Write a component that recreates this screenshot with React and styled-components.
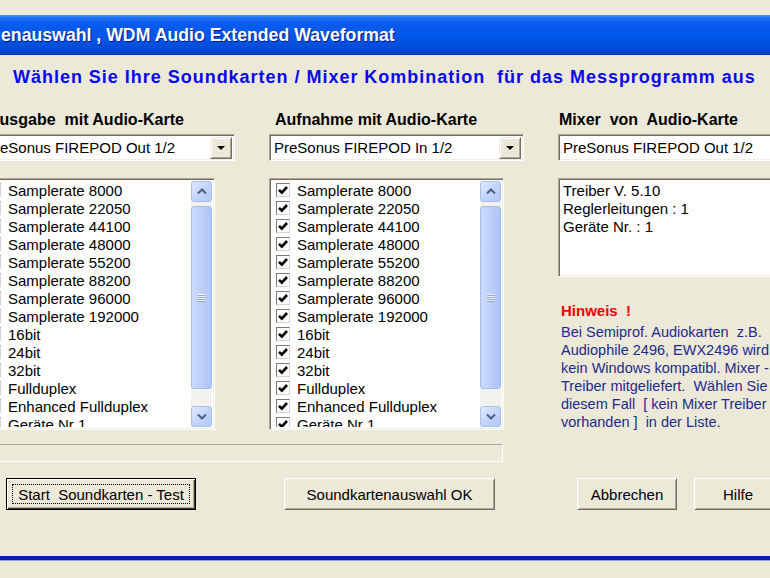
import React from 'react'
import styled, { createGlobalStyle } from 'styled-components'

const GlobalStyle = createGlobalStyle`
  html, body {
    margin: 0;
    padding: 0;
    background: #ECE9D8;
  }
  body {
    font-family: "Liberation Sans", Arial, sans-serif;
  }
`

const Window = styled.div`
  width: 770px;
  height: 578px;
  overflow: hidden;
  background: #ECE9D8;
  padding-top: 15px;
  box-sizing: border-box;
`

const TitleBar = styled.div`
  height: 40px;
  display: flex;
  align-items: center;
  padding-left: 1px;
  color: #fff;
  font-weight: bold;
  font-size: 17.7px;
  white-space: pre;
  text-shadow: 1px 1px 0 #0a1a8a;
  background: linear-gradient(to bottom, #4a96fa 0, #2274f4 6%, #0a5cf0 18%, #0056e6 55%, #004bd9 85%, #003cbd 100%);
`

const Heading = styled.div`
  margin: 11px 0 0 13px;
  height: 22px;
  line-height: 22px;
  color: #0808f0;
  font-weight: bold;
  font-size: 18px;
  letter-spacing: 0.98px;
  white-space: pre;
`

const Columns = styled.div`
  display: grid;
  grid-template-columns: 255px 255px 240px;
  column-gap: 34px;
  margin: 23px 0 0 -20px;
  align-items: start;
`

const Column = styled.div`
  display: flex;
  flex-direction: column;
`

const Label = styled.div`
  height: 18px;
  line-height: 18px;
  font-size: 16px;
  font-weight: bold;
  color: #000;
  white-space: pre;
  padding-left: ${p => p.$indent}px;
`

const Sunken = styled.div`
  box-sizing: border-box;
  background: #fff;
  border: 1px solid;
  border-color: #aca899 #fff #fff #aca899;
  box-shadow: inset 1px 1px 0 #716f64, inset -1px -1px 0 #f1efe2;
`

const Combo = styled(Sunken)`
  margin-top: 5px;
  height: 27px;
  display: flex;
  align-items: center;
  justify-content: space-between;
  padding: 0 2px 0 4px;
  font-size: 15px;
  white-space: nowrap;
`

const DropButton = styled.div`
  box-sizing: border-box;
  width: 22px;
  height: 22px;
  flex-shrink: 0;
  display: flex;
  align-items: center;
  justify-content: center;
  background: #ece9d8;
  border: 1px solid;
  border-color: #f1efe2 #716f64 #716f64 #f1efe2;
  box-shadow: inset 1px 1px 0 #fff, inset -1px -1px 0 #aca899;

  &::after {
    content: "";
    border-left: 4px solid transparent;
    border-right: 4px solid transparent;
    border-top: 4px solid #000;
    margin-top: 1px;
  }
`

const ListBox = styled(Sunken)`
  margin-top: 17px;
  width: 235px;
  height: 252px;
  display: flex;
  padding: 2px;
`

const Items = styled.div`
  flex: 1;
  overflow: hidden;
`

const Row = styled.div`
  height: 18px;
  display: flex;
  align-items: center;
  font-size: 15px;
  white-space: nowrap;
  color: #000;
`

const Check = styled.div`
  box-sizing: border-box;
  width: 14px;
  height: 14px;
  margin: 0 7px 0 4px;
  flex-shrink: 0;
  background: #fff;
  border: 1px solid;
  border-color: #7f7c70 #d9d6c8 #d9d6c8 #7f7c70;
  display: flex;
  align-items: center;
  justify-content: center;
`

const ScrollBar = styled.div`
  width: 21px;
  display: flex;
  flex-direction: column;
  background: #f4f2ec;
`

const ScrollButton = styled.div`
  box-sizing: border-box;
  height: 21px;
  display: flex;
  align-items: center;
  justify-content: center;
  border: 1px solid #aabfee;
  border-radius: 3px;
  background: linear-gradient(135deg, #e2ebfe 0%, #c4d5fb 50%, #b3c8f6 100%);
`

const Thumb = styled.div`
  box-sizing: border-box;
  margin-top: 4px;
  height: 183px;
  display: flex;
  align-items: center;
  justify-content: center;
  border: 1px solid #a5bcee;
  border-radius: 3px;
  background: linear-gradient(to right, #cddbfd 0%, #bccff9 50%, #b0c5f5 100%);
`

const Grip = styled.div`
  width: 8px;
  height: 8px;
  background: repeating-linear-gradient(to bottom, #eef3ff 0, #eef3ff 1px, #8ea6dc 1px, #8ea6dc 2px);
`

const Track = styled.div`
  flex: 1;
`

const TextBox = styled(Sunken)`
  margin-top: 17px;
  height: 99px;
  padding: 3px 4px;
  font-size: 15px;
  line-height: 18px;
  white-space: pre;
`

const HintTitle = styled.div`
  margin-top: 25px;
  padding-left: 3px;
  height: 18px;
  line-height: 18px;
  color: #f00000;
  font-size: 15px;
  font-weight: bold;
  white-space: pre;
`

const HintText = styled.div`
  margin-top: 3px;
  padding-left: 3px;
  color: #1e2a8c;
  font-size: 14.5px;
  line-height: 18px;
  white-space: pre;
`

const Progress = styled.div`
  box-sizing: border-box;
  margin: 13px 0 0 -20px;
  width: 523px;
  height: 18px;
  border: 1px solid;
  border-color: #aca899 #fff #fff #aca899;
`

const ButtonRow = styled.div`
  display: flex;
  margin-top: 16px;
  padding-left: 6px;
`

const Button = styled.div`
  box-sizing: border-box;
  flex-shrink: 0;
  width: ${p => p.$w}px;
  margin-left: ${p => p.$ml || 0}px;
  height: 32px;
  display: flex;
  align-items: center;
  justify-content: center;
  background: #ece9d8;
  font-size: 15px;
  color: #000;
  white-space: pre;
  border: 1px solid;
  border-color: ${p => p.$default ? '#000' : '#fff #716f64 #716f64 #fff'};
  box-shadow: ${p => p.$default
    ? 'inset 1px 1px 0 #fff, inset -1px -1px 0 #404040, inset -2px -2px 0 #aca899'
    : 'inset 1px 1px 0 #f1efe2, inset -1px -1px 0 #aca899'};
`

const Focus = styled.div`
  box-sizing: border-box;
  width: calc(100% - 10px);
  height: 20px;
  display: flex;
  align-items: center;
  justify-content: center;
  border: 1px dotted #000;
`

const BottomLine = styled.div`
  margin-top: 45px;
  height: 4px;
  background: #0a1fa6;
  border-top: 1px solid #efe6b4;
  border-bottom: 1px solid #8ea0d8;
`

const items = [
  'Samplerate 8000',
  'Samplerate 22050',
  'Samplerate 44100',
  'Samplerate 48000',
  'Samplerate 55200',
  'Samplerate 88200',
  'Samplerate 96000',
  'Samplerate 192000',
  '16bit',
  '24bit',
  '32bit',
  'Fullduplex',
  'Enhanced Fullduplex',
  'Geräte Nr 1',
]

const CheckMark = () => (
  <svg width="10" height="10" viewBox="0 0 10 10">
    <polyline points="1,4.8 3.8,7.6 9,2" fill="none" stroke="#000" strokeWidth="2.6" />
  </svg>
)

const Arrow = ({ up }) => (
  <svg width="10" height="7" viewBox="0 0 10 7">
    <polyline
      points={up ? '1,5.5 5,1.5 9,5.5' : '1,1.5 5,5.5 9,1.5'}
      fill="none"
      stroke="#4d6185"
      strokeWidth="2"
    />
  </svg>
)

const CheckList = () => (
  <ListBox>
    <Items>
      {items.map(i => (
        <Row key={i}>
          <Check><CheckMark /></Check>
          {i}
        </Row>
      ))}
    </Items>
    <ScrollBar>
      <ScrollButton><Arrow up /></ScrollButton>
      <Thumb><Grip /></Thumb>
      <Track />
      <ScrollButton><Arrow /></ScrollButton>
    </ScrollBar>
  </ListBox>
)

const App = () => {
  return (
    <Window>
      <GlobalStyle />
      <TitleBar>enauswahl , WDM Audio Extended Waveformat</TitleBar>
      <Heading>Wählen Sie Ihre Soundkarten / Mixer Kombination  für das Messprogramm aus</Heading>
      <Columns>
        <Column>
          <Label $indent={8}>Ausgabe  mit Audio-Karte</Label>
          <Combo>
            <span>PreSonus FIREPOD Out 1/2</span>
            <DropButton />
          </Combo>
          <CheckList />
        </Column>
        <Column>
          <Label $indent={6}>Aufnahme mit Audio-Karte</Label>
          <Combo>
            <span>PreSonus FIREPOD In 1/2</span>
            <DropButton />
          </Combo>
          <CheckList />
        </Column>
        <Column>
          <Label $indent={1}>Mixer  von  Audio-Karte</Label>
          <Combo>
            <span>PreSonus FIREPOD Out 1/2</span>
          </Combo>
          <TextBox>{'Treiber V. 5.10\nReglerleitungen : 1\nGeräte Nr. : 1'}</TextBox>
          <HintTitle>Hinweis  !</HintTitle>
          <HintText>
            {'Bei Semiprof. Audiokarten  z.B.\nAudiophile 2496, EWX2496 wird\nkein Windows kompatibl. Mixer -\nTreiber mitgeliefert.  Wählen Sie in\ndiesem Fall  [ kein Mixer Treiber\nvorhanden ]  in der Liste.'}
          </HintText>
        </Column>
      </Columns>
      <Progress />
      <ButtonRow>
        <Button $w={190} $default>
          <Focus>Start  Soundkarten - Test</Focus>
        </Button>
        <Button $w={211} $ml={88}>Soundkartenauswahl OK</Button>
        <Button $w={100} $ml={82}>Abbrechen</Button>
        <Button $w={88} $ml={17}>Hilfe</Button>
      </ButtonRow>
      <BottomLine />
    </Window>
  )
}

export default App
